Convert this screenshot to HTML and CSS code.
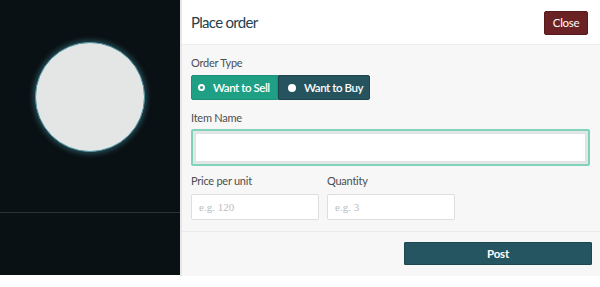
FILE: index.html
```html
<!DOCTYPE html>
<html>
<head>
<meta charset="utf-8">
<link rel="stylesheet" href="styles.css">
</head>
<body>
<div class="page">
  <div class="stage">
    <div class="stage-top">
      <div class="orb"></div>
    </div>
    <div class="stage-bottom"></div>
  </div>
  <div class="panel">
    <div class="head">
      <h1 class="title">Place order</h1>
      <button class="btn-close">Close</button>
    </div>
    <div class="body">
      <div class="label">Order Type</div>
      <div class="toggle">
        <div class="opt sell"><span class="ring"></span>Want to Sell</div>
        <div class="opt buy"><span class="dot"></span>Want to Buy</div>
      </div>
      <div class="label item-label">Item Name</div>
      <div class="field-big"><input class="big-input" type="text"></div>
      <div class="row">
        <div class="col">
          <div class="label">Price per unit</div>
          <input class="small-input" type="text" placeholder="e.g. 120">
        </div>
        <div class="col">
          <div class="label">Quantity</div>
          <input class="small-input" type="text" placeholder="e.g. 3">
        </div>
      </div>
    </div>
    <div class="foot">
      <button class="btn-post">Post</button>
    </div>
  </div>
</div>
</body>
</html>
```
FILE: styles.css
```css
* { box-sizing: border-box; }
html, body { margin: 0; padding: 0; background: #ffffff; }
body { font-family: Lato, "Open Sans", sans-serif; width: 600px; height: 287px; overflow: hidden; }
.page { display: flex; height: 276px; }
.stage { width: 180px; height: 275px; background: #0a1114; display: flex; flex-direction: column; }
.stage-top { height: 213px; border-bottom: 1px solid #2a3336; display: flex; justify-content: center; padding-top: 42px; }
.orb { width: 110px; height: 110px; border-radius: 50%; background: #e4e5e5; border: 1.5px solid #4f93a0; box-shadow: 0 0 5px 2px rgba(60,130,145,0.5); }
.stage-bottom { flex: 1; }
.panel { width: 420px; background: #f7f7f7; border-left: 2px solid #e6e8e8; display: flex; flex-direction: column; }
.head { height: 45px; background: #ffffff; border-bottom: 1px solid #ececec; display: flex; align-items: center; justify-content: space-between; padding: 0 12px 0 9px; }
.title { margin: 0; font-size: 15px; font-weight: 400; color: #25414a; letter-spacing: -0.7px; }
.btn-close { font-family: inherit; font-size: 11.5px; letter-spacing: -0.3px; color: #fff; background: #6b2225; border: 1px solid #571a1d; border-radius: 2px; height: 24px; width: 44px; padding: 0; margin-top: 1px; }
.body { padding: 10px 10px 0 9px; height: 187px; border-bottom: 1px solid #e9ecec; }
.label { font-size: 11px; letter-spacing: -0.25px; color: #4a4f52; height: 15px; line-height: 15px; white-space: nowrap; }
.toggle { display: flex; margin-top: 5px; height: 25px; width: 179px; }
.opt { display: flex; align-items: center; color: #fff; font-size: 11.5px; font-weight: 600; letter-spacing: -0.45px; white-space: nowrap; overflow: hidden; }
.sell { width: 87px; background: #1f9f83; border: 1px solid #1c8f77; border-radius: 2px 0 0 2px; padding-left: 6px; gap: 8px; }
.buy { width: 92px; background: #25545f; border: 1px solid #1e4550; border-radius: 0 2px 2px 0; padding-left: 9px; gap: 8px; }
.ring { flex: none; width: 7px; height: 7px; border-radius: 50%; background: #1f9f83; border: 2.5px solid #fff; }
.dot { flex: none; width: 8px; height: 8px; border-radius: 50%; background: #fff; }
.item-label { margin-top: 10px; }
.field-big { margin-top: 4px; width: 399px; height: 37px; border: 2px solid #80d3b9; border-radius: 2px; background: #e3e6e6; padding: 2px; }
.big-input { display: block; width: 100%; height: 100%; border: 1px solid #dfe2e2; background: #fff; outline: none; margin: 0; }
.row { display: flex; gap: 8px; margin-top: 8px; }
.col { display: flex; flex-direction: column; }
.col .label { height: 14px; line-height: 14px; }
.small-input { margin-top: 6px; width: 128px; height: 26px; border: 1px solid #dcdfdf; border-radius: 2px; background: #fff; padding: 0 7px; font-family: "Liberation Serif", serif; font-size: 11px; outline: none; }
.small-input::placeholder { color: #b9bdbe; }
.foot { flex: 1; display: flex; justify-content: flex-end; align-items: flex-start; padding: 10px 8px 0 0; }
.btn-post { font-family: inherit; font-size: 11.5px; font-weight: 700; letter-spacing: -0.2px; color: #fff; background: #255560; border: 1px solid #1d4650; border-radius: 1px; width: 188px; height: 23px; padding: 0; }
```
